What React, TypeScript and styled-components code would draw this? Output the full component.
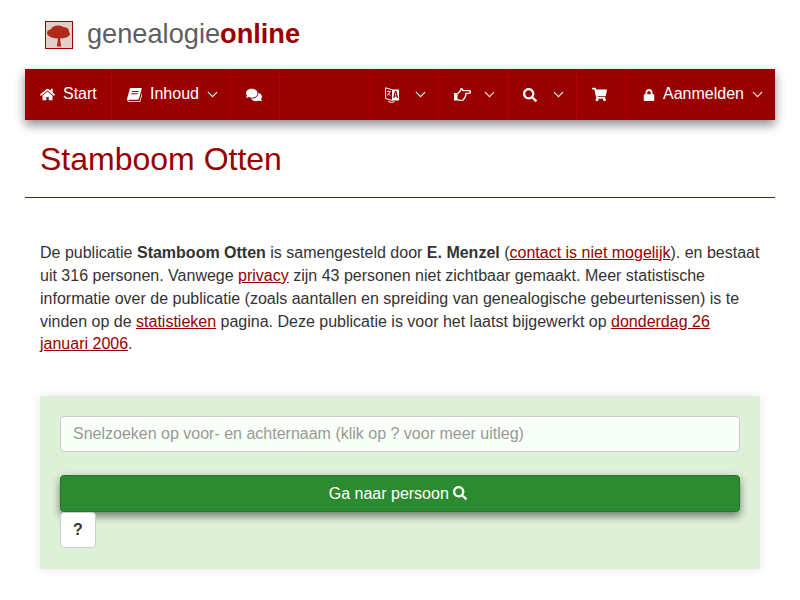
import React from "react";
import styled, { createGlobalStyle } from "styled-components";
import { FaHome, FaComments, FaSearch, FaShoppingCart, FaLock } from "react-icons/fa";
import { FiChevronDown } from "react-icons/fi";

const GlobalStyle = createGlobalStyle`
  html {
    overflow: hidden;
  }
  html, body {
    margin: 0;
    padding: 0;
    background: #fff;
  }
  body {
    font-family: "Liberation Sans", Arial, sans-serif;
    font-size: 16px;
    line-height: 1.42857;
    color: #333;
  }
`;

const BookIcon = () => (
  <svg width="15" height="14" viewBox="0 0 16 14" fill="#fff" preserveAspectRatio="none">
    <path d="M4.200 0H15c.6 0 .9.5.7 1.100l-2.700 8.900c-.4 1.300-1.100 1.800-2.400 1.800H2.400c-.8 0-1.100.3-.9.8.2.5.7.7 1.400.7h9.700c.5 0 .8-.2 1-.7l2.800-9.200c.5.200.7.700.5 1.300l-2.700 8.900c-.3.900-1 1.400-1.900 1.400H2.900C1.400 13.800.3 13 .1 11.700c-.1-.5 0-1 .1-1.400L2.800 1.400C3 .5 3.500 0 4.200 0z" />
    <path d="M5.400 3h6.700v.9H5.100zM4.700 5.300h6.700v.9H4.400z" fill="#990000" />
  </svg>
);

const LanguageIcon = () => (
  <svg width="15" height="16" viewBox="0 0 15 16" fill="none">
    <path d="M.6 .8 7.500 2.800V13.500L.6 11.500z" stroke="#fff" strokeWidth="1" />
    <path d="M7.500 2.500h6.500V13.500H7.500z" fill="#fff" />
    <path d="M2 4.500h3.700M3.800 3.600v1M4.900 4.500c-.4 2-1.400 3.300-2.800 3.900M2.900 6c.5 1.200 1.300 1.900 2.700 2.400" stroke="#fff" strokeWidth=".8" />
    <path d="M8.700 11l1.600-6.500h.7l1.600 6.500M9.400 9h2.600" stroke="#990000" strokeWidth="1.200" />
    <path d="M3 14c2 1.600 4.500 1.700 6.500.6" stroke="#fff" strokeWidth="1" />
  </svg>
);

const HandIcon = () => (
  <svg width="17" height="13" viewBox="0 0 17 13" fill="none">
    <rect x="0" y="5" width="3.500" height="7.500" fill="#fff" />
    <path
      d="M3.500 5.800 6 3.300C6.800 2.300 7 1.500 7 .7c1.400 0 2 1 1.700 1.900H15c2 0 2 2.800 0 2.800h-3.300c.3 1.200.1 2.300-.4 3-.1 1.200-.7 1.800-1.300 2.200-.2 1-1 1.700-2 1.700H6c-1 0-1.700-.6-2.500-.8"
      stroke="#fff"
      strokeWidth="1.300"
      strokeLinejoin="round"
    />
  </svg>
);

const TreeIcon = () => (
  <svg width="26" height="26" viewBox="0 0 26 26">
    <defs>
      <filter id="soft">
        <feGaussianBlur stdDeviation="0.6" />
      </filter>
    </defs>
    <rect width="26" height="26" fill="#e0cfcb" />
    <g fill="#b02a1c" filter="url(#soft)">
      <ellipse cx="12" cy="7.500" rx="7" ry="4" />
      <ellipse cx="17" cy="9" rx="6" ry="4" />
      <ellipse cx="6.500" cy="11" rx="5.500" ry="4" />
      <ellipse cx="13" cy="12" rx="11" ry="4.500" />
      <path d="M12 15h2l.4 5 .9 4.500h-4.600l.9-4.500z" />
    </g>
  </svg>
);

const App: React.FC = () => {
  return (
    <Page>
      <GlobalStyle />
      <Header>
        <LogoBox>
          <TreeIcon />
        </LogoBox>
        <Brand>
          genealogie<BrandBold>online</BrandBold>
        </Brand>
      </Header>

      <Nav>
        <NavItem $w={87}>
          <FaHome size={15} />
          <NavLabel>Start</NavLabel>
        </NavItem>
        <NavItem $w={119}>
          <BookIcon />
          <NavLabel>Inhoud</NavLabel>
          <Chevron />
        </NavItem>
        <NavItem $w={49}>
          <FaComments size={16} />
        </NavItem>
        <NavItem $w={70} $push>
          <LanguageIcon />
          <Chevron />
        </NavItem>
        <NavItem $w={69}>
          <HandIcon />
          <Chevron />
        </NavItem>
        <NavItem $w={69}>
          <FaSearch size={14} />
          <Chevron />
        </NavItem>
        <NavItem $w={49}>
          <FaShoppingCart size={15} />
        </NavItem>
        <NavItem $w={149} $last>
          <FaLock size={12} />
          <NavLabel>Aanmelden</NavLabel>
          <Chevron />
        </NavItem>
      </Nav>

      <Title>Stamboom Otten</Title>
      <Rule />

      <Intro>
        De publicatie <b>Stamboom Otten</b> is samengesteld door <b>E. Menzel</b> (
        <Link href="#">contact is niet mogelijk</Link>). en bestaat uit 316 personen. Vanwege{" "}
        <Link href="#">privacy</Link> zijn 43 personen niet zichtbaar gemaakt. Meer statistische
        informatie over de publicatie (zoals aantallen en spreiding van genealogische
        gebeurtenissen) is te vinden op de <Link href="#">statistieken</Link> pagina. Deze
        publicatie is voor het laatst bijgewerkt op{" "}
        <Link href="#">donderdag 26 januari 2006</Link>.
      </Intro>

      <SearchPanel>
        <SearchInput placeholder="Snelzoeken op voor- en achternaam (klik op ? voor meer uitleg)" />
        <GoButton>
          Ga naar persoon <FaSearch size={14} />
        </GoButton>
        <HelpButton>?</HelpButton>
      </SearchPanel>
    </Page>
  );
};

export default App;

const Page = styled.div`
  width: 750px;
  margin: 0 auto;
  padding-bottom: 20px;
`;

const Header = styled.div`
  height: 69px;
  display: flex;
  align-items: center;
  padding-left: 20px;
`;

const LogoBox = styled.div`
  width: 26px;
  height: 26px;
  border: 1px solid #990000;
  display: flex;
  margin-right: 14px;
`;

const Brand = styled.div`
  font-size: 27.2px;
  color: #5e5e5e;
`;

const BrandBold = styled.span`
  color: #990000;
  font-weight: 700;
`;

const Nav = styled.nav`
  height: 51px;
  display: flex;
  background: #990000;
  box-shadow: 0 5px 10px rgba(0, 0, 0, 0.45);
  color: #fff;
`;

const NavItem = styled.div<{ $w: number; $push?: boolean; $last?: boolean }>`
  width: ${({ $w }) => $w}px;
  box-sizing: border-box;
  display: flex;
  align-items: center;
  justify-content: flex-start;
  padding-left: ${({ $last }) => ($last ? "17px" : "15px")};
  margin-left: ${({ $push }) => ($push ? "auto" : "0")};
  border-left: ${({ $push }) => ($push ? "1px solid #b30000" : "0")};
  border-right: ${({ $last }) => ($last ? "0" : "1px solid #b30000")};
`;

const NavLabel = styled.span`
  margin-left: 8px;
`;

const Chevron = styled(FiChevronDown)`
  width: 17px;
  height: 17px;
  margin-left: auto;
  margin-right: 9px;
  stroke-width: 1.6;
`;

const Title = styled.h1`
  margin: 22px 15px 0;
  font-size: 32px;
  line-height: 35px;
  font-weight: 400;
  color: #990000;
`;

const Rule = styled.hr`
  margin: 20px 0 0;
  border: 0;
  border-top: 1px solid #990000;
`;

const Intro = styled.p`
  margin: 44px 15px 0;
`;

const Link = styled.a`
  color: #990000;
  text-decoration: underline;
`;

const SearchPanel = styled.div`
  margin: 40px 15px 0;
  padding: 20px;
  height: 173px;
  box-sizing: border-box;
  background: #dff0d8;
  box-shadow: 0 0 10px rgba(0, 0, 0, 0.1);
`;

const SearchInput = styled.input`
  display: block;
  width: 100%;
  height: 36px;
  box-sizing: border-box;
  padding: 6px 12px;
  border: 1px solid #ccc;
  border-radius: 4px;
  background: #f8fff6;
  font-family: inherit;
  font-size: 16px;
  color: #555;

  &::placeholder {
    color: #999;
  }
`;

const GoButton = styled.button`
  display: block;
  width: 100%;
  height: 37px;
  margin-top: 23px;
  padding: 0 16px 0 12px;
  border: 1px solid #26752a;
  border-radius: 4px;
  background: #2c8a30;
  color: #fff;
  font-family: inherit;
  font-size: 16px;
  box-shadow: 0 4px 8px rgba(0, 0, 0, 0.5);

  svg {
    vertical-align: -1px;
  }
`;

const HelpButton = styled.button`
  display: block;
  width: 36px;
  height: 36px;
  border: 1px solid #ccc;
  border-radius: 4px;
  background: #fff;
  color: #333;
  font-family: inherit;
  font-size: 16px;
  font-weight: 700;
  padding: 0;
`;
